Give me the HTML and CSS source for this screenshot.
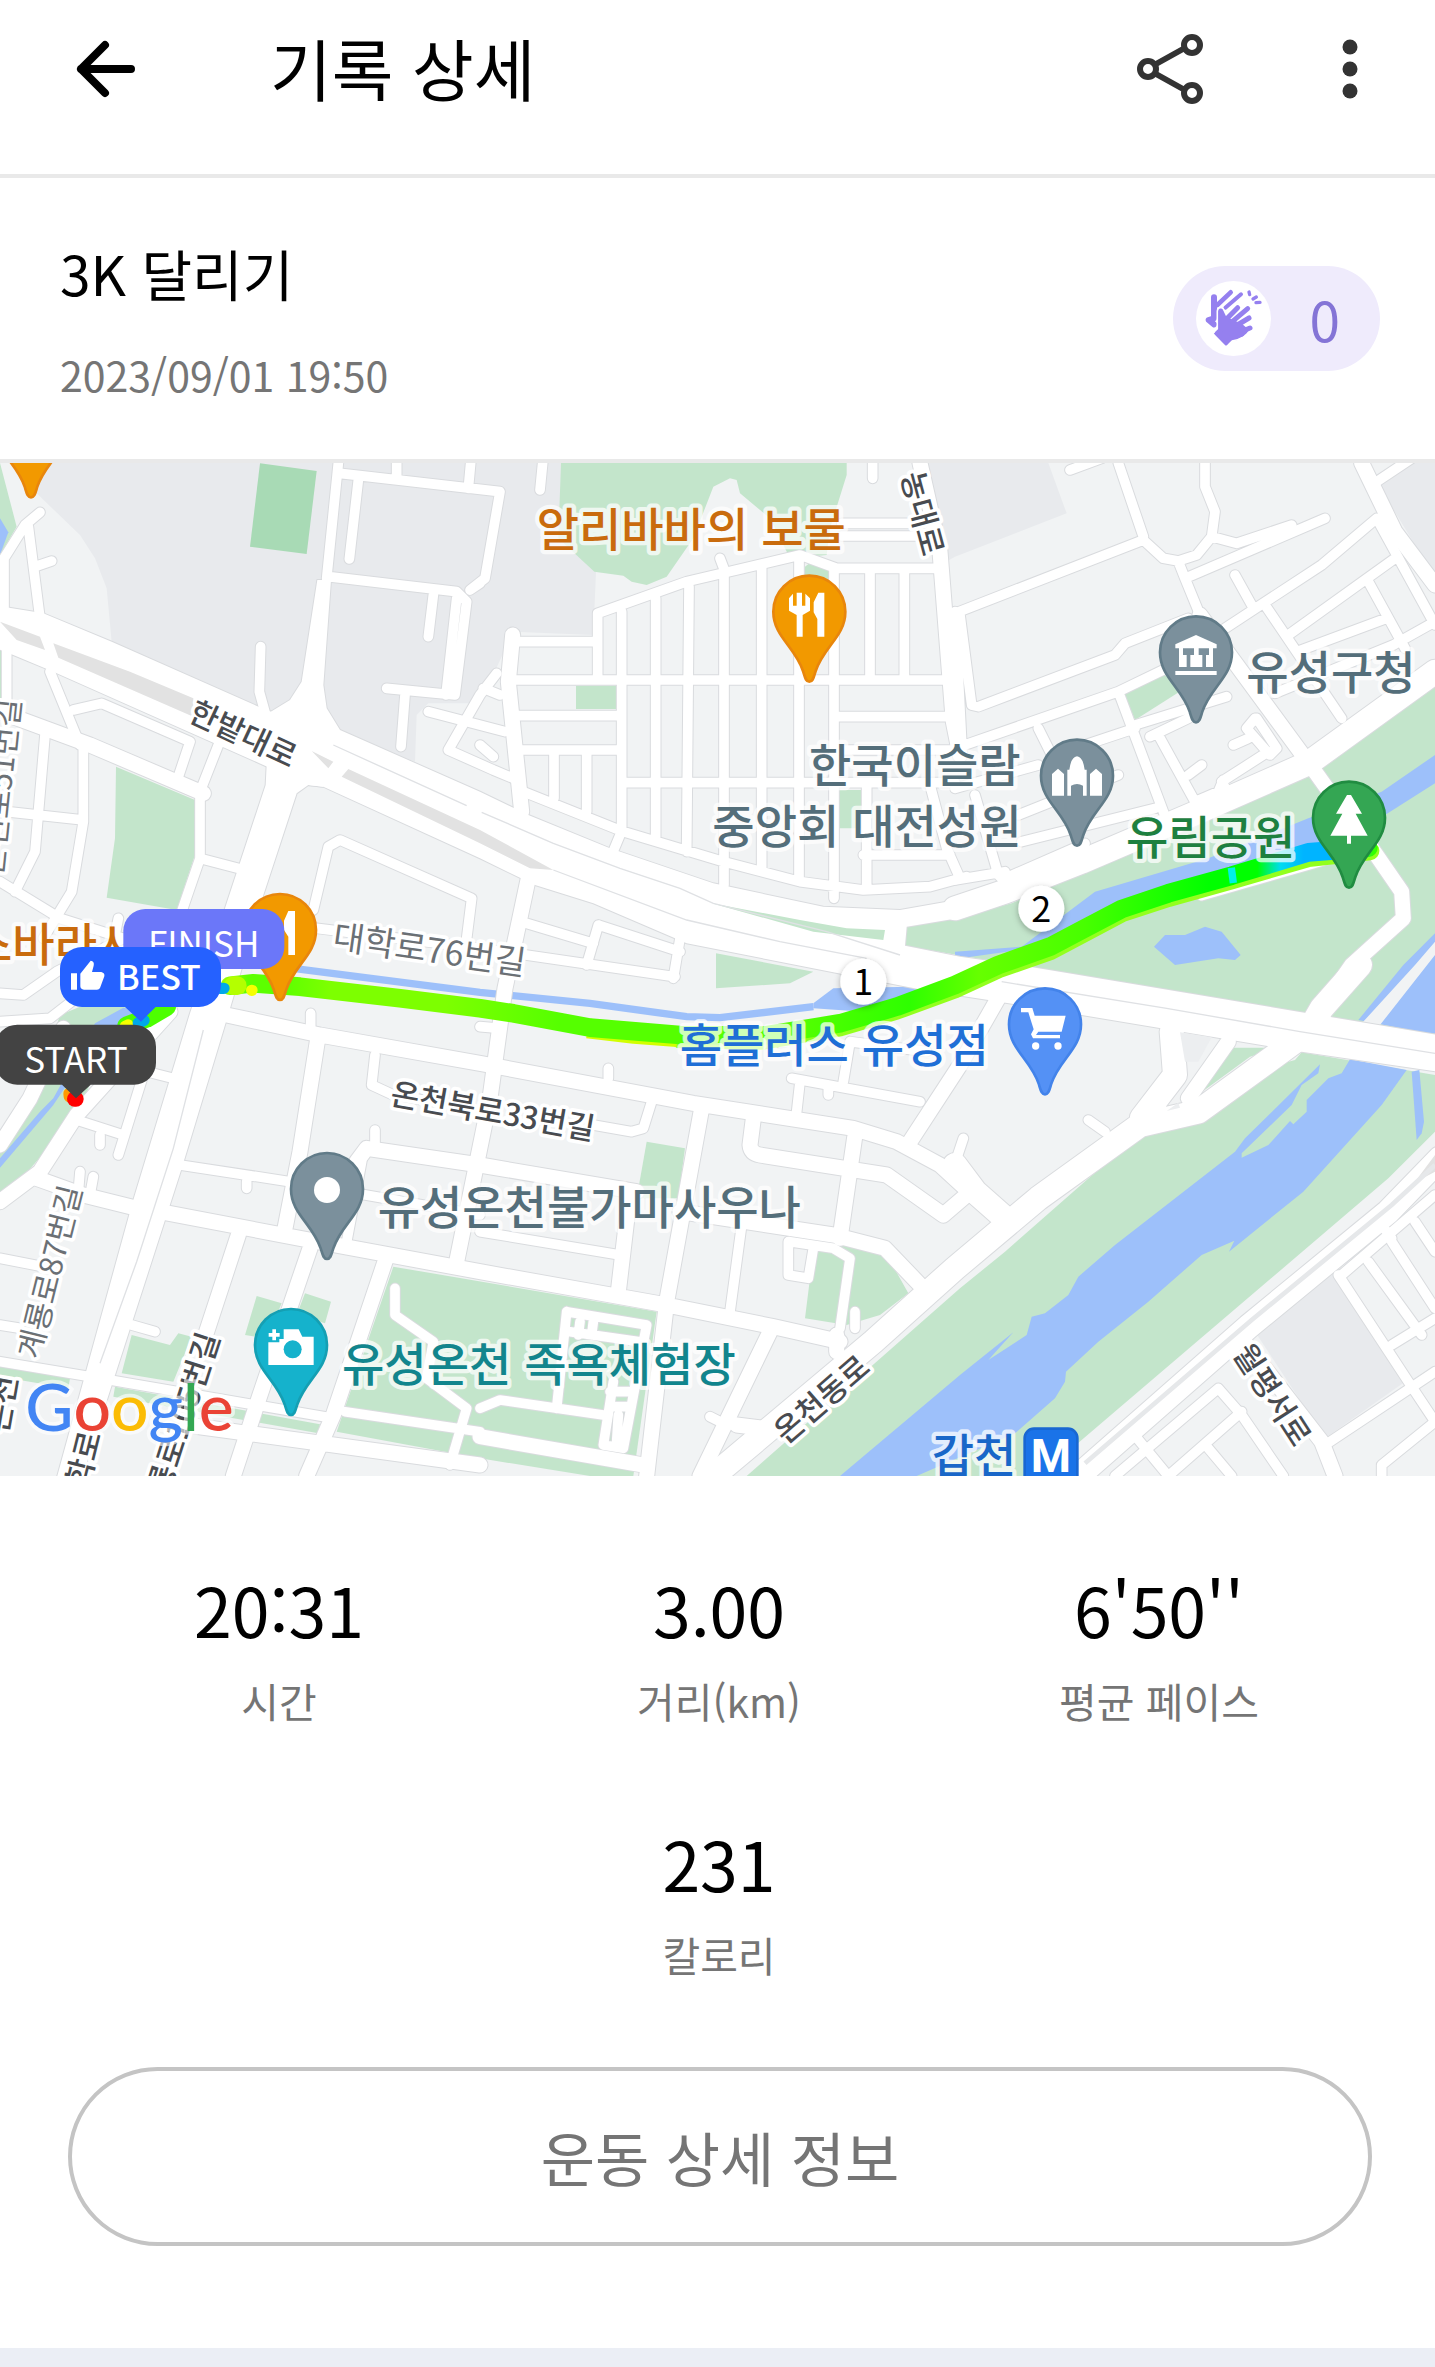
FILE: index.html
```html
<!DOCTYPE html>
<html lang="ko">
<head>
<meta charset="utf-8">
<meta name="viewport" content="width=device-width, initial-scale=1">
<title>기록 상세</title>
<link rel="stylesheet" href="styles.css">
</head>
<body>
<header class="app-bar">
  <button class="icon-button" type="button" aria-label="뒤로">
    <svg viewBox="0 0 80 80"><path class="back-arrow" d="M15 40H65M39 16L15 40L39 64"/></svg>
  </button>
  <h1 class="app-title">기록 상세</h1>
  <button class="icon-button" type="button" aria-label="공유">
    <svg viewBox="0 0 80 80">
      <g class="share-icon"><path d="M26 35L53 20M26 45L53 60"/><circle cx="18" cy="40" r="8"/><circle cx="62" cy="16" r="8"/><circle cx="62" cy="64" r="8"/></g>
    </svg>
  </button>
  <button class="icon-button" type="button" aria-label="더보기">
    <svg viewBox="0 0 80 80"><g fill="#333"><circle cx="40" cy="18" r="7.500"/><circle cx="40" cy="40" r="7.500"/><circle cx="40" cy="62" r="7.500"/></g></svg>
  </button>
</header>

<main>
  <section class="summary">
    <div class="summary-text">
      <h2 class="run-name">3K 달리기</h2>
      <p class="run-date">2023/09/01 19:50</p>
    </div>
    <button class="claps" type="button" aria-label="응원 0">
      <svg class="clap-icon" viewBox="108 78 225 225">
        <circle cx="220.500" cy="190.500" r="112.500" fill="#fff"/>
        <g class="clap-lines">
          <path stroke-width="18" d="M162 127V190L146 195L162 208"/>
          <path stroke-width="14" d="M212 112L172 150"/>
          <path stroke-width="12" d="M243 118L196 158"/>
          <path stroke-width="10" d="M267 111L269 119M289 126L279 132M288 143L300 142"/>
        </g>
        <path d="M172 168Q173 158 182 157Q191 158 192 168V180L248 205L270 224Q258 252 216 258L198 276L158 236L172 222Z" fill="#9580ef" stroke="#fff" stroke-width="5"/>
        <g class="clap-lines" stroke-width="15">
          <path d="M190 202L233 158M207 208L263 161M222 216L267 189M238 232L270 219"/>
          <path d="M172 235L198 262L215 245L244 238L200 205L183 170V225Z" fill="#9580ef"/>
        </g>
      </svg>
      <span class="clap-count">0</span>
    </button>
  </section>

  <svg class="map" viewBox="0 24 4305 3039" role="img" aria-label="달리기 경로 지도">
    <defs>
      <path id="pin" d="M0 210C-11 210-13 197-19 178C-43 105-108 74-108 0A108 108 0 0 1 108 0C108 74 43 105 19 178C13 197 11 210 0 210Z"/>
      <linearGradient id="pace" gradientUnits="userSpaceOnUse" x1="640" y1="0" x2="4120" y2="0">
        <stop offset="0" stop-color="#b4ff00"/><stop offset=".03" stop-color="#5cff00"/><stop offset=".06" stop-color="#5cff00"/>
        <stop offset=".1" stop-color="#7dff00"/><stop offset=".2" stop-color="#7dff00"/><stop offset=".3" stop-color="#55ff00"/>
        <stop offset=".5" stop-color="#55ff00"/><stop offset=".6" stop-color="#2eff00"/><stop offset=".66" stop-color="#6f0"/>
        <stop offset=".75" stop-color="#48ff00"/><stop offset=".86" stop-color="#0f0"/><stop offset=".9" stop-color="#0f0"/>
        <stop offset=".92" stop-color="#00dcf0"/><stop offset=".94" stop-color="#00b4ff"/><stop offset=".97" stop-color="#00b4ff"/><stop offset="1" stop-color="#3f0"/>
      </linearGradient>
      <filter id="soft" x="-30%" y="-30%" width="160%" height="160%"><feDropShadow dx="0" dy="6" stdDeviation="9" flood-opacity=".3"/></filter>
    </defs>

    <rect y="24" width="4305" height="3039" fill="#f1f3f4"/>

    <!-- campuses and large lots -->
    <g fill="#e8eaed">
      <path d="M60 24L110 115L240 240L285 310L320 400L335 560L810 780L1010 830L1245 920L1250 780L1285 745L1440 745L1540 530L1780 540L1788 350L1680 250L1683 24Z"/>
      <path d="M2770 24H3145L3200 175L2865 305L2830 325Z"/>
      <path d="M4235 24H4305V370L4215 220L4135 90Z"/>
      <path d="M4000 2455L4215 2780L3975 2950L3765 2630Z"/>
    </g>

    <!-- parks and river banks -->
    <g fill="#c3e5cb">
      <path d="M0 24L50 215L0 300ZM348 935L585 1035V1200L530 1365L320 1328L345 1150ZM0 580H10V730H0Z"/>
      <path d="M780 25L950 48L920 297L750 275Z" fill="#a8dab5"/>
      <path d="M1683 24H2540V60L2490 220L2480 300L2370 310L2310 190L2220 115L2210 75L2190 70L2140 95L2080 250L2000 365L1940 390L1895 380L1870 362L1783 350L1675 250Z"/>
      <path d="M2440 315L2488 345V400H2415V335ZM1728 692H1848V762H1728ZM2518 1005H2585V1120H2518Z"/>
      <path d="M3372 715L3485 655L3555 700L3405 795Z"/>
      <path d="M2700 1470L2710 1415L2865 1390L3035 1345L3245 1250L3595 1110L3925 955L3975 920L4305 690V1745L3895 1675L3075 1535Z"/>
      <path d="M3905 1792L4305 1860V2030L4165 2170L3245 2955L3120 3063H2240L2880 2500L3015 2390L3425 2030L3595 1995L3775 1845L3885 1815Z"/>
      <path d="M3680 1778H3835L3750 1805L3580 1930L3620 1875Z"/>
      <path d="M180 1680L240 1655H400L290 1830L240 1970L100 2130L30 2210L0 2222V2060L80 1950L120 1870Z"/>
      <path d="M2148 1495L2440 1550L2370 1585L2148 1600Z"/>
      <path d="M1940 2060L2055 2080L2035 2230H1910Z"/>
      <path d="M2375 2342L2655 2390L2725 2515L2640 2580L2540 2610L2415 2590L2440 2390Z"/>
      <path d="M1180 2435L1970 2570L1900 3063H1770L1440 3010L1010 2930Z"/>
      <path d="M770 2523L845 2545L800 2650L735 2640ZM915 2515L993 2540L975 2605L890 2580ZM395 2640L510 2670L535 2635L575 2645L520 2780L365 2755ZM0 2735L210 2770L205 2800L0 2765ZM345 2795L960 2908L955 2935L340 2825Z"/>
    </g>

    <!-- rivers and ponds -->
    <g fill="#9dc0fa">
      <path d="M0 190L25 232L0 300Z"/>
      <path d="M2865 1490L3065 1475L3165 1400L3285 1310L3625 1210L3925 1090L4145 1010L4305 900V985L4155 1080L3925 1210L3365 1360L3225 1430L3095 1480L2865 1512Z"/>
      <path d="M3462 1475L3495 1440H3555L3615 1415L3665 1430L3722 1500L3705 1515L3655 1510L3525 1530Z"/>
      <path d="M4305 1435L4210 1530L4075 1695L4295 1738L4305 1735Z"/>
      <path d="M4050 1813L4220 1845L4145 1950L3910 2210L3687 2390L3703 2357L3605 2400L3445 2540L3295 2660L3198 2750L3195 2780L3165 2830L3045 2935L2750 3063H2520L2880 2760L3040 2632L2965 2715L3080 2640L3095 2585L3135 2575L3205 2520L3235 2465L3345 2370L3705 2090L3735 2050L3960 1828L3955 1855L3905 1890L3875 1950L3725 2095V2108L3805 2070L3870 1998L3880 2008L3920 1970V1935L3985 1870L4025 1855Z"/>
      <path d="M4235 1850L4258 1845L4272 2000L4265 2035L4250 2055Z"/>
      <path d="M285 1705L370 1658L410 1665L200 1890L160 1950L0 2138V2110L120 1970L160 1930Z"/>
      <path d="M2440 1645L2500 1600L2730 1595L2770 1605L2590 1670L2440 1660Z"/>
    </g>
    <path d="M4245 1530L4305 1460V1500L4140 1710L4088 1702Z" fill="#f1f3f4"/>
    <path class="canal" d="M560 1490L880 1540L1440 1612L1770 1645L2060 1685L2160 1688L2440 1655"/>

    <!-- street network: the same shapes are drawn once wider as a grey edge, then in white -->
    <use class="edge" href="#streets"/>
    <g id="streets" class="streets">
      <path class="shape" d="M-10 452L130 475L335 560L805 768L1020 825L1440 1010L1585 1080L1830 1180L2140 1285L2470 1355L2700 1365L2900 1330V1385L2720 1415L2715 1472L2880 1505L3075 1533L3895 1670L4315 1740V1850L3905 1790L3245 1680L2965 1635L2770 1605L2340 1520L2060 1465L1780 1345L1605 1290L1440 1210L970 995L925 990L790 930L160 650L40 600L-10 580Z"/>
      <path class="shape" d="M952 375H993L970 690L980 760L1020 825L970 995L925 990L890 1015L790 1320L690 1660L545 2140L345 2760L245 3070H170L400 2235L570 1675L675 1360L797 990L800 930L805 775L870 735L905 680Z"/>
      <g class="s">
        <path d="M12 470V310L75 210L120 172M85 215L120 490M105 335L155 318M1015 24L980 370M782 575L778 710L800 790M1020 55L1500 110L1455 370L1410 405L1440 385M1075 75L1048 312M1190 24V70M1412 24L1405 100M985 365L1370 410L1400 440L1365 720L1160 700M1370 430L1338 720M1300 420L1285 545M1215 720L1203 875M1285 770L1515 830M1490 655L1440 720L1345 885L1480 945L1540 970M1450 700L1500 720M1440 870L1480 905"/>
        <path d="M1628 24L1620 105M1538 560H1790M1793 660V475L2060 380L2400 300L2510 340H2820M2160 310L2175 350M1865 470V1120M1967 430V1150M2067 395L2060 1190M2172 350V1290M2285 330V1240M2397 310V1270M2502 345V1330M2610 345V665M2713 345V665M1525 675H2840M1540 782H1865M1555 885H1850M1865 983H2865M2502 785H2850M2502 885H2880M1662 890V1030M1760 890V1070M1570 1010L1870 1130L2170 1220L2400 1280L2590 1305L2790 1295L2900 1265M1860 1140L1835 1200M2600 990V1300M2590 1200H2850M2790 990L2840 1180L2880 1270M2618 24V70M2525 205H2770M2525 243H2760M2840 150"/>
        <path d="M3355 24L3430 245M2865 475L3430 255L3490 310L3535 318L3590 300L3635 245L3645 170L3615 95V24M3210 45L3305 10M3635 245L3710 265L3875 210M3555 370L3975 190M3535 320L3555 370L3600 480M3705 360L3755 450M3675 520L3965 330L4130 190L4305 510M4130 80L4235 10M3795 450L4025 790M3865 540L4185 310M4105 380L4215 580M3890 590L4160 490M3825 715L4180 570L4305 500M2880 480L2915 750L2935 755L3345 600L3375 565L3565 490M2865 470L2885 860M2880 875L3355 710L3500 640M3355 710L3505 1110M3405 810L3680 725M3450 845L3565 790M3475 840L3585 1040L3655 1010L3670 975M3565 960L3605 930M3115 820L3165 920L3225 1050M3225 880L3405 820M3765 790L3740 820L3810 900L3830 880L3770 790M3700 870L3745 850M3805 890L3665 980L3700 1040M2865 1000L3115 930M3055 1080L3355 960M3065 1160L3465 1060M3255 1195L3235 1150M3015 1270L3255 1165M2865 1275L3015 1250M2985 1250L3025 1290M2925 1020L2995 1260M3605 1322L3995 1210"/>
        <path d="M20 580V780M150 650L240 870M220 765L305 745L570 860L530 980M135 840L105 1190L45 1310M250 880V1100L215 1310L130 1450M20 1070L250 1095M655 870L600 1010V1210L545 1370M600 1210L715 1240M0 1280L180 1390L370 1450M355 1390L345 1440M940 1365L985 1175L1020 1155L1415 1330L1400 1450M950 1420L1440 1480L2025 1565M1580 1405L1780 1465M1795 1410L2040 1490M1795 1410L1760 1530M2040 1450L2020 1570"/>
        <path d="M0 1615L70 1620L170 1550L370 1450M0 1700L150 1690L240 1620M230 1995L370 2040M355 2100L430 1860M440 1850L520 1870M300 2040V2070M240 2150L235 2210M280 2165L270 2220M1125 1800L1115 1890L1180 1920L1300 1940M540 2130L870 2180L1440 2280M740 2180V2200M1125 2025V2080M1085 2120L1040 2360M932 1675V1720M395 2610L465 2630M0 2410L130 2435M0 2610L60 2620M0 2720L330 2775L1000 2890M1185 2500V2580L1300 2660L1280 2770L1400 2860L1350 3030M1035 2870L1440 2930"/>
        <path d="M1825 1840V1870M1955 1940L1930 2020L1895 2030L1780 2010M2375 1870L2760 1940M2400 1880L2390 1970M2485 1900V1920M2550 1760L2530 1880M2550 1760L2780 1790M1440 2330L1860 2400M2225 2310L2190 2570M2370 2360L2500 2380L2550 2410L2520 2620M2365 2360V2460L2425 2470L2440 2380M2565 2570V2620M1700 2570L1940 2610L1870 2980L1810 2970L1840 2780M1700 2570L1670 2860M1440 2860L1500 2835L1810 2880M1710 2630L1920 2660M1740 2600L1735 2640M1780 2600L1775 2640M1830 2810H1890M1830 2855H1890M1855 2880L1850 2960M1440 1715L1500 1720M2130 2885L2180 2910M3265 1995L3315 2030M2890 2050L2870 2110"/>
        <path d="M3655 2800L3345 3063M3655 2800L3725 2880L3850 3063M3725 2870L3505 3063M4305 2750L3975 2970M4015 2460L4225 2780L4305 2900M4025 2460L4305 2220M4105 2420L4265 2640M4175 2360L4305 2560M4245 2300L4305 2390M4175 2670L4305 2590M4130 2290L4175 2350M3395 2930L3505 3063M3625 2980L3695 3063M4145 3063V3030L4305 2900"/>
      </g>
      <g class="m">
        <path d="M1538 540L1525 680L1565 1070M2760 24L2820 290L2860 800L2880 900M4085 24L4185 230L4305 390M0 770L270 870L610 1015M1585 1270L1515 1600L1470 1930L1370 2420M0 2070L90 1930L190 1720M510 1670L230 1980L120 2150L0 2240M110 2170L250 2220L410 2260"/>
        <path d="M680 1680L960 1740L1440 1825L2080 1945L2560 2020L2690 2060L2820 2130L2940 2240M955 1740L900 2090L855 2320M480 2270L900 2350L1440 2450L2000 2550L2320 2615L2520 2660M1070 2120L1100 2080L1440 2130L1910 2210M715 2340L620 2630M930 2380L780 2820L700 3063M1155 2420L1000 2880L920 3063M560 2910L1440 3030M2105 1960L2000 2540L1940 3063M2260 1990L2250 2070Q2252 2095 2280 2100L2660 2160L2830 2280L2900 2220M2565 2040L2520 2350M3000 1620L2880 1830L2730 2060M1890 2210L1855 2510M2040 2270L2500 2340L2655 2380L2770 2500M1440 2945L1930 3030M3685 1760L3565 1930M3725 2650L3965 2960L4005 3063M3600 480L3945 950L3995 1020L4115 1180L4205 1310L4210 1390L4055 1530L3965 1660"/>
        <path d="M2310 2630L2100 3063M2210 2910L2290 2920M2510 2690V2640"/>
      </g>
      <g class="l">
        <path d="M2865 1360L3015 1310L3245 1220L3585 1075L3925 925L4305 650M4080 1530L3965 1660L3925 1730L3595 1970L3420 2010L3115 2230L2865 2440L2620 2660L2140 3063M3515 1730L3525 1860L3425 1990M2865 2130L2925 2210L3015 2290"/>
        <path d="M3235 3063L3745 2615L4165 2270L4320 2110"/>
      </g>
    </g>

    <!-- medians and traffic islands -->
    <g fill="#e2e2e2">
      <path d="M0 500L120 545L135 585L50 555ZM160 565L390 650L580 730V785L175 608ZM935 888L1000 920L985 940ZM1045 942L1440 1125L1660 1245L1590 1240L1440 1165L1025 965Z"/>
      <path d="M3540 1732L3635 1747L3595 1820L3555 1820ZM3500 1968L3535 1943L3540 1958Z" fill="#eceef0"/>
      <path d="M4305 2100L4245 2180L4230 2190L4305 2150Z"/>
    </g>
    <path d="M2135 1345L2400 1395L2540 1420L2655 1425L2650 1455L2440 1430Z" fill="#c3e5cb"/>
    <path class="divider" d="M1000 870L1400 1052M1445 1072L1660 1165L1860 1240L2040 1300L2140 1345L2480 1430L2700 1500M1660 1245L2060 1395L2340 1460L2600 1510M3005 1580L3500 1660L3900 1730L4305 1795M610 1725L520 2080L410 2420L300 2725"/>
    <path class="median-line" d="M3255 3025L3755 2595L4175 2250L4305 2130"/>

    <!-- recorded route, coloured by pace -->
    <g class="route">
      <path stroke="#93ff1e" d="M2040 1752L2290 1756L2520 1716L2690 1666L2865 1602L2995 1542L3150 1488L3245 1438L3365 1374L3505 1328L3695 1275L3925 1208L4110 1188"/>
      <path stroke="#d2ff00" stroke-width="24" stroke-linecap="butt" d="M1760 1738L1900 1754L2030 1764"/>
      <path stroke="url(#pace)" d="M690 1592L760 1585L900 1595L1200 1630L1440 1660L1540 1675L1770 1718L2040 1740L2290 1742L2520 1705L2690 1655L2865 1590L2995 1530L3150 1475L3245 1425L3365 1362L3505 1315L3695 1262L3925 1192L4105 1178"/>
      <path stroke="#b4ff00" d="M700 1592H712"/>
      <path stroke="#4dff00" d="M500 1655L440 1690L380 1712"/>
      <path stroke="#f6ff00" stroke-width="34" d="M755 1606H756M376 1714L384 1710"/>
      <path stroke="#00a8e8" stroke-width="34" d="M660 1600H672M415 1704L432 1696"/>
      <path stroke="#f90" stroke-width="34" d="M207 1915L208 1925"/>
      <path stroke="red" stroke-width="46" d="M224 1932H228"/>
      <path stroke="#00f0e8" stroke-width="22" stroke-linecap="butt" d="M3694 1238L3700 1284"/>
    </g>

    <!-- street names -->
    <g class="street-name">
      <text class="strong" transform="translate(560 795) rotate(25)">한밭대로</text>
      <text class="strong" transform="translate(2702 60) rotate(75)">농대로</text>
      <text class="wide" transform="translate(995 1480) rotate(8)">대학로76번길</text>
      <text class="strong" transform="translate(1168 1948) rotate(10)">온천북로33번길</text>
      <text class="strong" transform="translate(2358 2970) rotate(-41)">온천동로</text>
      <text class="strong" transform="translate(3696 2694) rotate(57)">월평서로</text>
      <text transform="translate(118 2716) rotate(-76)">계룡로87번길</text>
      <text class="strong" text-anchor="end" transform="translate(660 2646) rotate(-72)">계룡로105번길</text>
      <text class="strong" text-anchor="end" transform="translate(304 2938) rotate(-76)">대학로</text>
      <text class="strong" text-anchor="end" transform="translate(52 2768) rotate(-80)">온천</text>
      <text text-anchor="end" transform="translate(62 735) rotate(-84)">온천로51번길</text>
    </g>

    <!-- place names -->
    <g class="place">
      <text x="1610" y="273" fill="#c96b0d">알리바바의 보물</text>
      <text x="-90" y="1518" fill="#c96b0d">스바라시</text>
      <text x="2427" y="982" fill="#546e7a">한국이슬람</text>
      <text x="2137" y="1164" fill="#546e7a">중앙회 대전성원</text>
      <text x="3739" y="701" fill="#546e7a">유성구청</text>
      <text x="3378" y="1197" fill="#1e8040">유림공원</text>
      <text x="2039" y="1820" fill="#1f6fd6">홈플러스 유성점</text>
      <text x="1133" y="2308" fill="#546e7a">유성온천불가마사우나</text>
      <text x="1026" y="2778" fill="#12858d">유성온천 족욕체험장</text>
      <text x="2795" y="3052" fill="#1967c8">갑천</text>
    </g>

    <!-- place pins -->
    <g class="pins">
      <g transform="translate(93 -83)" fill="#f29900" stroke="#e8860c"><use href="#pin"/></g>
      <g transform="translate(840 1425)" fill="#f29900" stroke="#e8860c"><use href="#pin"/><path class="glyph" d="M12-28L25-57H45V75H25V20L12 0Z"/></g>
      <g transform="translate(2428 470)" fill="#f29900" stroke="#e8860c"><use href="#pin"/><path class="glyph" d="M-61-40L-49-54V-18H-38V-57H-22V-18H-12V-54L2-40V-3L-20 10V75H-38V10L-61-3ZM13-28L27-57H45V75H24V22L13 2Z"/></g>
      <g transform="translate(3588 592)" fill="#7b909c" stroke="#617b88"><use href="#pin"/><path class="glyph" fill-rule="evenodd" d="M0-52L62-24V-12H51V44H-51V-12H-62V-24ZM-39-12V8H-28V44H-17V8H-6V-12ZM8-12V8H19V44H30V8H39V-12ZM-62 56H62V68H-62Z"/></g>
      <g transform="translate(3231 962)" fill="#7b909c" stroke="#617b88"><use href="#pin"/><path class="glyph" d="M-75 60V-5L-57-21L-39-5V60ZM39 60V-5L57-21L75-5V60ZM-29 60V-18H-23Q-18-56 0-58Q18-56 23-18H29V60H18V30Q0 20-18 30V60Z"/></g>
      <g transform="translate(4047 1088)" fill="#34a653" stroke="#208c41"><use href="#pin"/><path class="glyph" d="M-6-68H6L39-12H20L56 54H6V78H-6V54H-56L-20-12H-39Z"/></g>
      <g transform="translate(3135 1708)" fill="#5491f5" stroke="#4383ea"><use href="#pin"/><path class="glyph" d="M-72-49H-38L-31-26H62L50 22H-20L-27 32H45V42H-36L-42 30L-34 15L-50-36H-72Z"/><circle class="glyph" cx="-28" cy="65" r="11"/><circle class="glyph" cx="39" cy="65" r="11"/></g>
      <g transform="translate(981 2202)" fill="#7b909c" stroke="#617b88"><use href="#pin"/><circle class="glyph" r="39" cy="3"/></g>
      <g transform="translate(873 2670)" fill="#15b2cc" stroke="#159fb3"><use href="#pin"/><path class="glyph" d="M-68-8H-35V-18H-22V-47H23L34-25H68V60H-68ZM-56-47H-45V-36H-34V-25H-45V-14H-56V-25H-67V-36H-56Z"/><circle cx="5" cy="13" r="27" stroke="none"/></g>
      <rect x="3074" y="2921" width="158" height="170" rx="28" fill="#1a73e8" stroke="#1967d2"/>
    </g>
    <text class="metro" x="3153" y="3050">M</text>

    <text class="logo" x="76" y="2928"><tspan fill="#4285f4">G</tspan><tspan fill="#ea4335">o</tspan><tspan fill="#fbbc05">o</tspan><tspan fill="#4285f4">g</tspan><tspan fill="#34a853">l</tspan><tspan fill="#ea4335">e</tspan></text>

    <!-- kilometre markers -->
    <g class="km">
      <circle cx="2590" cy="1580" r="69"/><text x="2590" y="1619">1</text>
      <circle cx="3124" cy="1361" r="69"/><text x="3124" y="1400">2</text>
    </g>

    <!-- start, best and finish flags -->
    <g class="flag">
      <rect x="370" y="1362" width="483" height="180" rx="66" fill="#6b77f9"/>
      <text x="611" y="1507">FINISH</text>
      <path d="M246 1476H597A66 66 0 0 1 663 1542V1590A66 66 0 0 1 597 1656H467L423 1700L375 1656H246A66 66 0 0 1 180 1590V1542A66 66 0 0 1 246 1476Z" fill="#2561ff"/>
      <path fill="#fff" d="M213 1555H231V1604H213ZM241 1556L272 1517Q284 1518 281 1532L276 1551H304Q315 1554 313 1564L300 1599Q297 1604 291 1604H252Q241 1603 241 1594Z"/>
      <text class="strong" x="477" y="1605">BEST</text>
      <path d="M52 1709H402A66 66 0 0 1 468 1775V1823A66 66 0 0 1 402 1889H272L228 1930L186 1889H52A66 66 0 0 1-14 1823V1775A66 66 0 0 1 52 1709Z" fill="#434343"/>
      <text x="228" y="1855">START</text>
    </g>
  </svg>

  <dl class="stats">
    <div class="stat"><dt>시간</dt><dd>20:31</dd></div>
    <div class="stat"><dt>거리(km)</dt><dd>3.00</dd></div>
    <div class="stat"><dt>평균 페이스</dt><dd>6'50''</dd></div>
    <div class="stat stat-middle"><dt>칼로리</dt><dd>231</dd></div>
  </dl>

  <div class="actions"><button class="detail-button" type="button">운동 상세 정보</button></div>
</main>
<div class="section-gap"></div>
</body>
</html>
```

FILE: styles.css
```css
* { box-sizing: border-box; }

body {
  margin: 0;
  background: #fff;
  color: #000;
  font-family: "Noto Sans CJK KR", "Noto Sans", sans-serif;
}

h1, h2, p, dl, dd { margin: 0; font-weight: 400; }

button {
  padding: 0;
  border: 0;
  background: none;
  color: inherit;
  font: inherit;
  cursor: pointer;
}

/* App bar */
.app-bar {
  display: flex;
  align-items: center;
  padding: 29px 45px 65px 66px;
  border-bottom: 4px solid #e9e9e9;
}
.icon-button { width: 80px; height: 80px; }
.icon-button svg { display: block; width: 80px; height: 80px; }
.icon-button + .icon-button { margin-left: 100px; }
.app-title {
  flex: 1;
  margin-left: 124px;
  font-size: 67px;
  line-height: 76px;
  padding-bottom: 4px;
}
.back-arrow {
  fill: none;
  stroke: #000;
  stroke-width: 8px;
  stroke-linecap: round;
  stroke-linejoin: round;
}
.share-icon { fill: none; stroke: #333; stroke-width: 6px; }

/* Run summary */
.summary {
  display: flex;
  align-items: center;
  justify-content: space-between;
  padding: 54px 55px 55px 60px;
  border-bottom: 4px solid #e9e9e9;
}
.summary-text { display: grid; gap: 32px; }
.run-name { font-size: 55px; line-height: 80px; }
.run-date { color: #757575; font-size: 41px; line-height: 60px; }
.claps {
  display: flex;
  align-items: center;
  gap: 38px;
  padding: 15px 40px 15px 23px;
  border-radius: 53px;
  background: #efebfc;
}
.clap-icon { width: 75px; height: 75px; }
.clap-lines {
  fill: none;
  stroke: #9580ef;
  stroke-linecap: round;
  stroke-linejoin: round;
}
.clap-count { color: #8474d6; font-size: 55px; line-height: 75px; }

/* Map */
.map { display: block; width: 100%; height: auto; }
.streets { fill: none; stroke: #fff; stroke-linecap: round; stroke-linejoin: round; }
.edge { --edge: 6px; --street: #d9dbde; }
.streets { stroke: var(--street, #fff); }
.streets .shape { fill: var(--street, #fff); stroke-width: var(--edge, 0px); }
.streets .s { stroke-width: calc(29px + var(--edge, 0px)); }
.streets .m { stroke-width: calc(45px + var(--edge, 0px)); }
.streets .l { stroke-width: calc(72px + var(--edge, 0px)); }
.canal { fill: none; stroke: #9dc0fa; stroke-width: 22px; }
.divider { fill: none; stroke: #dfe1e4; stroke-width: 4px; }
.median-line { fill: none; stroke: #e6e8ea; stroke-width: 14px; }
.route { fill: none; stroke-width: 56px; stroke-linecap: round; stroke-linejoin: round; }

.street-name {
  fill: #6b7075;
  stroke: #fff;
  stroke-width: 22px;
  stroke-linejoin: round;
  paint-order: stroke;
  font-size: 93px;
}
.street-name .strong { fill: #484b50; font-weight: 500; }
.street-name .wide { font-size: 102px; }
.place {
  stroke: rgba(255, 255, 255, .72);
  stroke-width: 26px;
  stroke-linejoin: round;
  paint-order: stroke;
  font-size: 138px;
  font-weight: 500;
}
.pins { stroke-width: 8px; }
.pins .glyph { fill: #fff; stroke: none; }
.metro {
  fill: #fff;
  font-family: Roboto, sans-serif;
  font-size: 138px;
  font-weight: 700;
  text-anchor: middle;
}
.logo {
  stroke: rgba(255, 255, 255, .6);
  stroke-width: 22px;
  paint-order: stroke;
  font-family: Lato, sans-serif;
  font-size: 198px;
  font-weight: 500;
}
.km circle { fill: #fff; filter: url(#soft); }
.km text { font-size: 108px; text-anchor: middle; }
.flag text { fill: #fff; font-size: 105px; text-anchor: middle; }
.flag .strong { font-size: 102px; font-weight: 500; }

/* Figures */
.stats {
  display: grid;
  grid-template-columns: repeat(3, 1fr);
  row-gap: 83px;
  padding: 83px 56px 83px 59px;
}
.stat {
  display: flex;
  flex-direction: column-reverse;
  gap: 11px;
  text-align: center;
}
.stat-middle { grid-column: 2; }
.stat dt { color: #757575; font-size: 41px; line-height: 60px; }
.stat dd { font-size: 68px; line-height: 100px; }

/* Details button */
.actions { padding: 0 63px 102px 68px; }
.detail-button {
  width: 100%;
  height: 179px;
  border: 4px solid #c4c4c4;
  border-radius: 90px;
  color: #757575;
  font-size: 59px;
}
.section-gap { height: 19px; background: #ebeef5; }
```
